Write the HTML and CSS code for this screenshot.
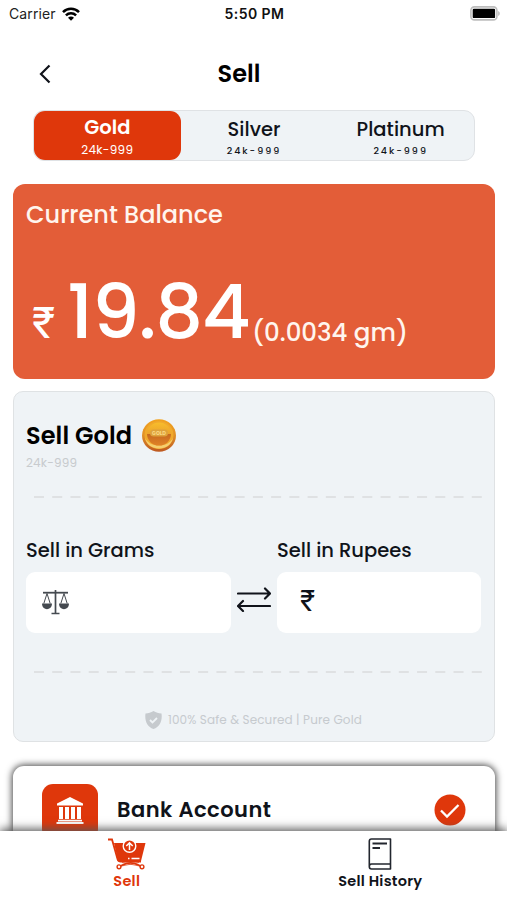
FILE: index.html
```html
<!DOCTYPE html>
<html lang="en">
<head>
<meta charset="utf-8">
<title>Sell</title>
<link rel="stylesheet" href="styles.css">
</head>
<body>
<div class="screen">
  <div class="status">
    <div class="carrier"><span>Carrier</span>
      <svg width="18" height="14" viewBox="0 0 18 14"><g fill="none" stroke="#000" stroke-width="2.5"><path d="M1 5.200C5.400.7 12.600.7 17 5.200"/><path d="M3.900 8.300c2.900-2.800 7.300-2.800 10.200 0"/></g><path d="M9 13.800 6 10.700c1.700-1.600 4.300-1.600 6 0z"/></svg>
    </div>
    <div class="time"><span>5:50 PM</span></div>
    <svg class="battery" width="30" height="15" viewBox="0 0 30 15"><rect x=".9" y=".9" width="26" height="13" rx="3.500" fill="#fff" stroke="#bdbdbd" stroke-width="1.600"/><rect x="2.700" y="2.700" width="22.400" height="9.400" rx="1.200"/><path d="M28.300 5c1.800 1 1.800 4 0 5z" fill="#aaa"/></svg>
  </div>

  <header class="header">
    <svg class="back" width="12" height="20" viewBox="0 0 12 20"><path d="M10.500 1.500 2 10l8.500 8.500" fill="none" stroke="#10131a" stroke-width="2.200"/></svg>
    <h1><span>Sell</span></h1>
  </header>

  <div class="tabs">
    <div class="tab active"><b><span>Gold</span></b><small><span>24k-999</span></small></div>
    <div class="tab silver"><b><span>Silver</span></b><small><span>24k-999</span></small></div>
    <div class="tab platinum"><b><span>Platinum</span></b><small><span>24k-999</span></small></div>
  </div>

  <section class="balance">
    <h2><span>Current Balance</span></h2>
    <div class="amount"><span class="rupee">₹</span><span class="value">19.84</span><span class="grams">(0.0034 gm)</span></div>
  </section>

  <section class="sell">
    <div class="sell-title"><h2><span>Sell Gold</span></h2>
      <svg width="34" height="34" viewBox="0 0 34 34">
        <defs><linearGradient id="rim" x1="0" y1="0" x2="0" y2="1"><stop offset="0" stop-color="#f3a31e"/><stop offset=".5" stop-color="#e09028"/><stop offset="1" stop-color="#bd5720"/></linearGradient>
        <linearGradient id="face" x1="0" y1="0" x2="0" y2="1"><stop offset="0" stop-color="#f8bd2b"/><stop offset=".5" stop-color="#eba32c"/><stop offset=".52" stop-color="#c86a1f"/><stop offset="1" stop-color="#df8227"/></linearGradient></defs>
        <ellipse cx="17" cy="17.500" rx="17" ry="16.300" fill="url(#rim)"/>
        <ellipse cx="17" cy="17" rx="14.500" ry="14" fill="#f0a92c"/>
        <path d="M3 20c3 14 25 14 28 0-5 10-23 10-28 0z" fill="#f5ce70"/>
        <ellipse cx="17" cy="16" rx="12" ry="11.500" fill="url(#face)"/>
        <rect x="8" y="11.500" width="18" height="7" rx="3.500" fill="#dda23c"/>
        <text x="17" y="17" text-anchor="middle" class="coin-text">GOLD</text>
      </svg>
    </div>
    <p class="purity"><span>24k-999</span></p>
    <svg class="dashes" width="448" height="2" viewBox="0 0 448 2"><path d="M0 1h448" stroke="#dfe1e3" stroke-width="2" stroke-dasharray="10 8.240"/></svg>
    <div class="fields">
      <div class="field grams-field"><label><span>Sell in Grams</span></label>
        <div class="input">
          <svg width="27" height="25" viewBox="0 0 27 25"><g fill="none" stroke="#454a50"><path d="M1 2.700h25" stroke-width="1.800"/><path d="M13.500 0v23" stroke-width="1.700"/><path d="M9.500 23.500h8" stroke-width="1.500"/><path d="M1.800 13.500 5 3.500l3.200 10M18.800 13.500 22 3.500l3.200 10" stroke-width="1"/></g><path d="M0 13.500h10c0 7.500-10 7.500-10 0zM17 13.500h10c0 7.500-10 7.500-10 0z" fill="#454a50"/></svg>
        </div>
      </div>
      <svg class="swap" width="34" height="26" viewBox="0 0 34 26"><g fill="none" stroke="#10131a" stroke-width="2.200" stroke-linecap="round" stroke-linejoin="round"><path d="M1 7.500h32M28 2.500l5 5-5 5M33 20H1M6 15l-5 5 5 5"/></g></svg>
      <div class="field rupees-field"><label><span>Sell in Rupees</span></label>
        <div class="input"><span class="rupee">₹</span></div>
      </div>
    </div>
    <svg class="dashes" width="448" height="2" viewBox="0 0 448 2"><path d="M0 1h448" stroke="#dfe1e3" stroke-width="2" stroke-dasharray="10 8.240"/></svg>
    <div class="secured">
      <svg width="17" height="18" viewBox="0 0 17 18"><path d="M8.500 0c2.500 1.600 5 2.300 8 2.500 1 7-1.500 13-8 15.500C2 15.500-.5 9.500.5 2.500c3-.2 5.500-.9 8-2.500z" fill="#c6cace"/><path d="m5 9 2.500 2.500L12 7" fill="none" stroke="#eff3f6" stroke-width="1.800"/></svg>
      <span>100% Safe &amp; Secured | Pure Gold</span>
    </div>
  </section>

  <section class="bank">
    <div class="bank-icon">
      <svg width="28" height="27" viewBox="0 0 28 27" fill="#fff"><path d="M14 0 27 6.500v2H1v-2zM3 10h4v12H3zM9 10h4v12H9zM15 10h4v12h-4zM21 10h4v12h-4zM2 22.800h24v1.700H2zM.5 25h27v2H.5z"/></svg>
    </div>
    <h2><span>Bank Account</span></h2>
    <svg class="check" width="32" height="32" viewBox="0 0 32 32"><circle cx="16" cy="16" r="15.500" fill="#df370b"/><path d="m7 16.500 6 6L24.500 11" fill="none" stroke="#fff" stroke-width="2.300"/></svg>
  </section>

  <nav class="nav">
    <div class="item on">
      <svg width="38" height="32" viewBox="0 0 38 32"><path d="M0 1.500h4L9.500 21c.5 2 1.500 2.500 3.500 2.500h20" fill="none" stroke="#df370b" stroke-width="1.800"/><path d="M6 5h31.500l-4.500 18H10z" fill="#df370b"/><path d="M11 28.500C14 28 17 24.800 22.500 24.800S31 28 34 28.500" fill="none" stroke="#df370b" stroke-width="1.700"/><path d="M14 24.500l20 4M31 24.500l-20 4" fill="none" stroke="#df370b" stroke-width=".7"/><circle cx="11" cy="28.800" r="1.900" fill="#fff" stroke="#df370b" stroke-width="1.400"/><circle cx="34" cy="28.800" r="1.900" fill="#fff" stroke="#df370b" stroke-width="1.400"/><circle cx="21.500" cy="8" r="7" fill="#fff"/><circle cx="21.500" cy="8" r="5.600" fill="#df370b"/><path d="M21.500 12V5M18.300 8l3.200-3.200L24.700 8" fill="none" stroke="#fff" stroke-width="1.500"/><path d="M20 20.500h1.500M23.500 20.500h8" stroke="#fff" stroke-width="1.300"/></svg>
      <b><span>Sell</span></b>
    </div>
    <div class="item history">
      <svg width="24" height="32" viewBox="0 0 24 32"><g fill="none" stroke="#22262e" stroke-width="1.600" stroke-linejoin="round"><path d="M22.500 26V1H3.500C2 1 1.300 1.700 1.300 3.200v25.300c0 1.700.7 2.500 2.200 2.500h19v-5h-19C2 26 1.300 27 1.300 28.500"/><path d="M4.500 5.500H19M4.500 10H12" stroke-width="2"/></g></svg>
      <b><span>Sell History</span></b>
    </div>
  </nav>
</div>
</body>
</html>
```

FILE: styles.css
```css
* { box-sizing: border-box; }
body { margin: 0; background: #fff; color: #10131a; font-family: Poppins, Inter, "Liberation Sans", sans-serif; }
h1, h2, p { margin: 0; }
svg { display: block; flex: none; }
.screen { width: 507px; height: 900px; overflow: hidden; display: flex; flex-direction: column; white-space: nowrap; }

.status { height: 27px; flex: none; display: grid; grid-template-columns: 1fr 1fr 1fr; align-items: center; padding: 0 7px 0 9px; font-family: Inter, "Liberation Sans", sans-serif; }
.carrier { display: flex; align-items: center; gap: 6px; font-size: 14px; color: #222; letter-spacing: 0.1px; }
.time { text-align: center; font-size: 14px; font-weight: 600; color: #111; letter-spacing: 0.45px; }
.battery { justify-self: end; }

.header { height: 83px; flex: none; display: grid; grid-template-columns: 60px 1fr 128px; align-items: center; padding: 11px 0 0 39px; }
.header h1 { text-align: center; font-size: 24px; line-height: 30px; font-weight: 600; color: #000; }

.tabs { width: 442px; height: 51px; flex: none; margin-left: 33px; display: grid; grid-template-columns: repeat(3, 1fr); background: #eff3f6; border: 1px solid #dfe2e5; border-radius: 11px; }
.tab { display: flex; flex-direction: column; align-items: center; padding-top: 9px; }
.tab b { font-size: 19.5px; line-height: 20px; font-weight: 500; letter-spacing: 0.05px; }
.tab small { font-size: 9.5px; line-height: 12px; margin-top: 5px; font-weight: 500; letter-spacing: 2px; }
.tab.active { background: #df370b; color: #fff; border-radius: 11px; padding-top: 7px; }
.tab.active b { font-weight: 600; }
.tab.active small { font-size: 12px; line-height: 14px; font-weight: 400; letter-spacing: 0.3px; }

.balance { width: 482px; height: 195px; flex: none; margin: 23px 0 0 13px; padding: 16px 0 0 13px; border-radius: 12px; background: #e35d38; color: #fff5ee; }
.balance h2 { font-size: 24px; line-height: 30px; font-weight: 500; letter-spacing: 0; }
.amount { display: flex; align-items: flex-start; margin-top: 34px; padding-left: 6px; color: #fff; }
.amount .rupee { width: 35px; font-size: 43px; line-height: 117px; }
.rupee { font-family: Inter, "Liberation Sans", sans-serif; }
.amount .value { width: 185px; font-size: 75px; line-height: 96px; font-weight: 500; letter-spacing: -1.2px; }
.amount .grams { font-size: 24.5px; line-height: 137px; font-weight: 500; color: #fff5ee; }

.sell { width: 482px; height: 351px; flex: none; margin: 12px 0 0 13px; padding: 26px 0 0 12px; background: #eff3f6; border: 1px solid #dfe2e4; border-radius: 10px; }
.sell-title { display: flex; align-items: center; gap: 9px; height: 34px; }
.sell-title h2 { width: 107px; font-size: 24px; font-weight: 600; color: #000; letter-spacing: 0.1px; }
.coin-text { font-size: 5px; font-weight: 700; fill: #fbd985; }
.purity { font-size: 12px; line-height: 16px; margin-top: 3px; color: #c8cbce; letter-spacing: 0.2px; }
.dashes { margin-left: 8px; }
.purity + .dashes { margin-top: 25px; }
.fields { display: flex; margin-top: 42px; }
.field label { display: block; font-size: 19.5px; line-height: 22px; font-weight: 500; }
.input { height: 61px; margin-top: 10px; border-radius: 9px; background: #fff; display: flex; align-items: center; }
.grams-field { width: 205px; }
.grams-field .input { padding: 0 0 1px 16px; }
.rupees-field { width: 204px; }
.rupees-field .input { padding: 0 0 3px 23px; font-size: 28px; }
.swap { margin: 46px 6px 0 6px; }
.fields + .dashes { margin-top: 38px; }
.secured { display: flex; align-items: center; gap: 6px; margin: 38px 0 0 119px; height: 18px; font-size: 12px; color: #c6cace; letter-spacing: 0.12px; }

.bank { width: 482px; height: 88px; flex: none; margin: 24px 0 0 13px; padding: 18px 0 0 29px; display: flex; background: #fff; border-radius: 11px; box-shadow: 0 0 7px 1px #444; }
.bank-icon { width: 56px; height: 56px; border-radius: 11px; background: #df370b; display: grid; place-items: center; padding-bottom: 4px; }
.bank h2 { width: 317px; margin: 13px 0 0 19px; font-size: 21px; line-height: 26px; font-weight: 600; letter-spacing: 0.5px; }
.check { margin-top: 10px; }

.nav { height: 69px; flex: none; position: relative; z-index: 1; margin-top: -23px; background: #fff; box-shadow: 0 -2px 9px #555; display: grid; grid-template-columns: 1fr 1fr; }
.item { display: flex; flex-direction: column; align-items: center; padding-top: 7px; }
.item b { font-size: 14.5px; line-height: 18px; margin-top: 2px; font-weight: 600; letter-spacing: 0.25px; }
.on { color: #df370b; }
```
